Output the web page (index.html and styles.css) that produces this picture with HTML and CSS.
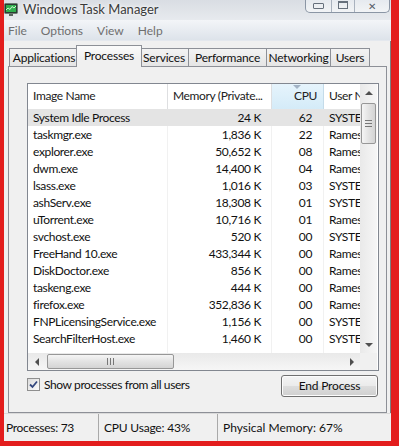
FILE: index.html
```html
<!DOCTYPE html>
<html>
<head>
<meta charset="utf-8">
<title>Windows Task Manager</title>
<link rel="stylesheet" href="styles.css">
</head>
<body>
<div class="window">
  <div class="titlebar">
    <svg class="app-icon" viewBox="0 0 14 14" width="14" height="14">
      <rect x="0.5" y="0.5" width="13" height="10" rx="1" fill="#2b3a33" stroke="#6d7d74"/>
      <rect x="2" y="2" width="10" height="7" fill="#2fae4e"/>
      <polyline points="2,7 4,5 6,6.5 8,3.5 10,5 12,3" fill="none" stroke="#d9ffd9" stroke-width="0.9"/>
      <rect x="5" y="11" width="4" height="2" fill="#58655e"/>
    </svg>
    <span class="title">Windows Task Manager</span>
    <div class="caption-btns">
      <span class="cb cb-min"><i></i></span>
      <span class="cb cb-max"><i></i></span>
      <span class="cb cb-close">&#x2715;</span>
    </div>
  </div>
  <div class="menubar">
    <span>File</span><span>Options</span><span>View</span><span>Help</span>
  </div>
  <div class="tabs">
    <div class="tab t-app">Applications</div>
    <div class="tab t-proc active">Processes</div>
    <div class="tab t-serv">Services</div>
    <div class="tab t-perf">Performance</div>
    <div class="tab t-net">Networking</div>
    <div class="tab t-users">Users</div>
  </div>
  <div class="panel">
    <div class="listbox">
      <div class="list-content">
        <div class="lv-header">
          <div class="c c1">Image Name</div>
          <div class="c c2">Memory (Private...</div>
          <div class="c c3 sorted"><span class="sort-arrow"></span>CPU</div>
          <div class="c c4">User Name</div>
        </div>
        <div class="lv-row sel"><div class="c c1">System Idle Process</div><div class="c c2">24 K</div><div class="c c3">62</div><div class="c c4">SYSTEM</div></div>
        <div class="lv-row"><div class="c c1">taskmgr.exe</div><div class="c c2">1,836 K</div><div class="c c3">22</div><div class="c c4">Ramesh</div></div>
        <div class="lv-row"><div class="c c1">explorer.exe</div><div class="c c2">50,652 K</div><div class="c c3">08</div><div class="c c4">Ramesh</div></div>
        <div class="lv-row"><div class="c c1">dwm.exe</div><div class="c c2">14,400 K</div><div class="c c3">04</div><div class="c c4">Ramesh</div></div>
        <div class="lv-row"><div class="c c1">lsass.exe</div><div class="c c2">1,016 K</div><div class="c c3">03</div><div class="c c4">SYSTEM</div></div>
        <div class="lv-row"><div class="c c1">ashServ.exe</div><div class="c c2">18,308 K</div><div class="c c3">01</div><div class="c c4">SYSTEM</div></div>
        <div class="lv-row"><div class="c c1">uTorrent.exe</div><div class="c c2">10,716 K</div><div class="c c3">01</div><div class="c c4">Ramesh</div></div>
        <div class="lv-row"><div class="c c1">svchost.exe</div><div class="c c2">520 K</div><div class="c c3">00</div><div class="c c4">SYSTEM</div></div>
        <div class="lv-row"><div class="c c1">FreeHand 10.exe</div><div class="c c2">433,344 K</div><div class="c c3">00</div><div class="c c4">Ramesh</div></div>
        <div class="lv-row"><div class="c c1">DiskDoctor.exe</div><div class="c c2">856 K</div><div class="c c3">00</div><div class="c c4">Ramesh</div></div>
        <div class="lv-row"><div class="c c1">taskeng.exe</div><div class="c c2">444 K</div><div class="c c3">00</div><div class="c c4">Ramesh</div></div>
        <div class="lv-row"><div class="c c1">firefox.exe</div><div class="c c2">352,836 K</div><div class="c c3">00</div><div class="c c4">Ramesh</div></div>
        <div class="lv-row"><div class="c c1">FNPLicensingService.exe</div><div class="c c2">1,156 K</div><div class="c c3">00</div><div class="c c4">SYSTEM</div></div>
        <div class="lv-row"><div class="c c1">SearchFilterHost.exe</div><div class="c c2">1,460 K</div><div class="c c3">00</div><div class="c c4">SYSTEM</div></div>
        <div class="lv-row"><div class="c c1"></div><div class="c c2"></div><div class="c c3"></div><div class="c c4"></div></div>
      </div>
      <div class="vscroll">
        <div class="sb-btn"><span class="arr arr-up"></span></div>
        <div class="sb-track v"><div class="thumb vthumb"><span class="grip-v"></span></div></div>
        <div class="sb-btn"><span class="arr arr-down"></span></div>
      </div>
      <div class="hscroll">
        <div class="sb-btn"><span class="arr arr-left"></span></div>
        <div class="sb-track h"><div class="thumb hthumb"><span class="grip-h"></span></div></div>
        <div class="sb-btn"><span class="arr arr-right"></span></div>
      </div>
      <div class="corner"></div>
    </div>
    <div class="panel-footer">
      <label class="check">
        <span class="box">
          <svg viewBox="0 0 11 11" width="11" height="11"><path d="M2 5.5 L4.5 8 L9 2.5" fill="none" stroke="#33477e" stroke-width="1.8"/></svg>
        </span>
        <span>Show processes from all users</span>
      </label>
      <div class="btn">End Process</div>
    </div>
  </div>
  <div class="statusbar">
    <div class="sc sc1">Processes: 73</div>
    <div class="sc sc2">CPU Usage: 43%</div>
    <div class="sc sc3">Physical Memory: 67%</div>
  </div>
</div>
</body>
</html>
```
FILE: styles.css
```css
html, body {
  margin: 0;
  padding: 0;
}
body {
  width: 399px;
  height: 446px;
  overflow: hidden;
  background: #e31d1d;
  font-family: Lato, "Liberation Sans", sans-serif;
  font-size: 12px;
  color: #111;
}
.window {
  margin-left: 4px;
  width: 387px;
  height: 441px;
  background: #f0f0f0;
  display: flex;
  flex-direction: column;
  box-shadow: inset -1px 0 #7d7d7d;
  overflow: hidden;
}

/* title bar */
.titlebar {
  height: 20px;
  flex: none;
  display: flex;
  align-items: center;
  background: linear-gradient(#d9dde3, #e7eaee);
}
.app-icon {
  margin-right: 5px;
  flex: none;
}
.title {
  font-size: 13px;
  color: #3a3a3a;
  text-shadow: 0 0 6px #fff, 0 0 3px #fff;
  margin-top: -2px;
}
.caption-btns {
  margin-left: auto;
  margin-right: 1px;
  align-self: flex-start;
  display: flex;
  height: 12px;
  border: 1px solid #8b96a5;
  border-top: none;
  border-radius: 0 0 5px 5px;
  background: linear-gradient(#e6eaef, #f2f4f6);
}
.cb {
  height: 12px;
  display: flex;
  align-items: center;
  justify-content: center;
  color: #555d68;
}
.cb-min { width: 25px; border-right: 1px solid #a9b2be; }
.cb-max { width: 22px; border-right: 1px solid #a9b2be; }
.cb-close { width: 34px; font-size: 10px; line-height: 12px; }
.cb-min i {
  display: block;
  width: 9px;
  height: 4px;
  border: 1px solid #66707c;
  border-radius: 1px;
  margin-top: -1px;
}
.cb-max i {
  display: block;
  width: 8px;
  height: 5px;
  border: 1px solid #66707c;
  border-top-width: 2px;
  margin-top: -2px;
}

/* menu */
.menubar {
  height: 21px;
  flex: none;
  display: flex;
  align-items: center;
  gap: 14px;
  padding-left: 4px;
  color: #6f6f6f;
  font-size: 12px;
  background: linear-gradient(#f3f5f8, #dde3ea);
  border-bottom: 1px solid #e4e8ee;
  box-sizing: border-box;
}

/* tabs */
.tabs {
  height: 21px;
  flex: none;
  margin-top: 4px;
  padding-left: 5px;
  display: flex;
  align-items: flex-end;
  position: relative;
  z-index: 2;
}
.tab {
  box-sizing: border-box;
  height: 18px;
  margin-left: -1px;
  border: 1px solid #8d9097;
  border-bottom: none;
  background: linear-gradient(#f3f3f3, #e5e5e5);
  text-align: center;
  line-height: 17px;
  letter-spacing: -0.2px;
  white-space: nowrap;
  position: relative;
}
.t-app { width: 70px; margin-left: 0; }
.t-proc { width: 62px; }
.t-serv { width: 50px; }
.t-perf { width: 79px; }
.t-net { width: 65px; }
.t-users { width: 40px; }
.tab.active {
  width: 66px;
  height: 22px;
  margin-left: -3px;
  margin-right: -2px;
  margin-bottom: -1px;
  background: linear-gradient(#fbfbfb, #f0f0f0 60%);
  line-height: 19px;
  z-index: 3;
}

/* panel */
.panel {
  box-sizing: border-box;
  width: 379px;
  height: 347px;
  margin-left: 4px;
  flex: none;
  border: 1px solid #8d9097;
  padding: 16px 7px 0 18px;
  position: relative;
  z-index: 1;
}
.listbox {
  box-sizing: border-box;
  width: 352px;
  height: 288px;
  border: 1px solid #828790;
  background: #fff;
  display: grid;
  grid-template-columns: 332px 17px;
  grid-template-rows: 269px 17px;
}
.list-content {
  overflow: hidden;
  grid-column: 1;
  grid-row: 1;
  letter-spacing: -0.35px;
}
.lv-header, .lv-row {
  display: flex;
  white-space: nowrap;
}
.lv-header {
  height: 25px;
  align-items: stretch;
}
.lv-row {
  height: 17px;
  line-height: 17px;
}
.c {
  box-sizing: border-box;
  flex: none;
  overflow: hidden;
}
.c1 { width: 140px; padding-left: 5px; border-right: 1px solid #f1f1f1; }
.c2 { width: 104px; padding-right: 10px; text-align: right; border-right: 1px solid #f1f1f1; }
.c3 { width: 52px; padding-right: 11px; text-align: right; border-right: 1px solid #f1f1f1; }
.c4 { width: 80px; padding-left: 5px; }
.lv-header .c {
  line-height: 24px;
  color: #222;
  border-right: 1px solid #dedfe1;
  position: relative;
}
.lv-header .c2 { text-align: left; padding-left: 5px; padding-right: 0; }
.lv-header .c3 { padding-right: 6px; }
.lv-header .c4 { border-right: none; }
.lv-header .sorted {
  background: linear-gradient(#e6f4fc, #d4ebf8);
  border-right-color: #c4dbe9;
}
.sort-arrow {
  position: absolute;
  left: 21px;
  top: 1px;
  width: 0;
  height: 0;
  border-left: 4px solid transparent;
  border-right: 4px solid transparent;
  border-top: 4px solid #a3b3c5;
}
.lv-row.sel {
  background: #e4e4e4;
}
.lv-row.sel .c {
  border-right-color: #e4e4e4;
}

/* scrollbars */
.vscroll {
  grid-column: 2;
  grid-row: 1;
  display: flex;
  flex-direction: column;
  background: linear-gradient(to right, #e9e9e9, #f6f6f6);
}
.hscroll {
  grid-column: 1;
  grid-row: 2;
  display: flex;
  background: linear-gradient(#e9e9e9, #f6f6f6);
}
.corner {
  grid-column: 2;
  grid-row: 2;
  background: #f0f0f0;
}
.sb-btn {
  width: 17px;
  height: 17px;
  flex: none;
  display: flex;
  align-items: center;
  justify-content: center;
}
.sb-track { flex: 1; }
.arr {
  width: 0;
  height: 0;
  display: block;
}
.arr-up {
  border-left: 4px solid transparent;
  border-right: 4px solid transparent;
  border-bottom: 4px solid #505050;
}
.arr-down {
  border-left: 4px solid transparent;
  border-right: 4px solid transparent;
  border-top: 4px solid #505050;
}
.arr-left {
  border-top: 4px solid transparent;
  border-bottom: 4px solid transparent;
  border-right: 4px solid #505050;
}
.arr-right {
  border-top: 4px solid transparent;
  border-bottom: 4px solid transparent;
  border-left: 4px solid #505050;
}
.thumb {
  box-sizing: border-box;
  border: 1px solid #979797;
  border-radius: 2px;
  display: flex;
  align-items: center;
  justify-content: center;
}
.vthumb {
  width: 15px;
  height: 41px;
  margin: 2px 0 0 1px;
  background: linear-gradient(to right, #f5f5f5, #e3e3e3 50%, #d4d4d4);
}
.hthumb {
  height: 15px;
  width: 127px;
  margin: 1px 0 0 2px;
  background: linear-gradient(#f5f5f5, #e3e3e3 50%, #d4d4d4);
}
.grip-v {
  width: 7px;
  height: 5px;
  border-top: 1px solid #777;
  border-bottom: 1px solid #777;
  background: linear-gradient(transparent 2px, #777 2px, #777 3px, transparent 3px);
}
.grip-h {
  width: 5px;
  height: 7px;
  border-left: 1px solid #777;
  border-right: 1px solid #777;
  background: linear-gradient(to right, transparent 2px, #777 2px, #777 3px, transparent 3px);
}

/* footer */
.panel-footer {
  display: flex;
  justify-content: space-between;
  align-items: flex-start;
  margin-top: 4px;
  width: 352px;
}
.check {
  display: flex;
  align-items: center;
  gap: 4px;
  margin-top: 2px;
  letter-spacing: -0.4px;
}
.box {
  box-sizing: border-box;
  width: 13px;
  height: 13px;
  border: 1px solid #8f8f8f;
  background: linear-gradient(135deg, #dcdcdc, #fbfbfb);
  display: flex;
  align-items: center;
  justify-content: center;
}
.btn {
  box-sizing: border-box;
  width: 97px;
  height: 22px;
  margin-right: 1px;
  border: 1px solid #707070;
  border-radius: 3px;
  background: linear-gradient(#f4f4f4, #ebebeb 48%, #dddddd 52%, #cfcfcf);
  box-shadow: inset 0 0 0 1px #fcfcfc;
  text-align: center;
  line-height: 20px;
  letter-spacing: -0.2px;
}

/* status */
.statusbar {
  flex: 1;
  display: flex;
  border-top: 1px solid #dadada;
  background: #f0f0f0;
}
.sc {
  box-sizing: border-box;
  padding-top: 6px;
  white-space: nowrap;
}
.sc1 { width: 95px; padding-left: 2px; border-right: 1px solid #a9a9a9; letter-spacing: -0.3px; }
.sc2 { width: 119px; padding-left: 5px; border-right: 1px solid #a9a9a9; letter-spacing: -0.2px; }
.sc3 { flex: 1; padding-left: 5px; }
```
